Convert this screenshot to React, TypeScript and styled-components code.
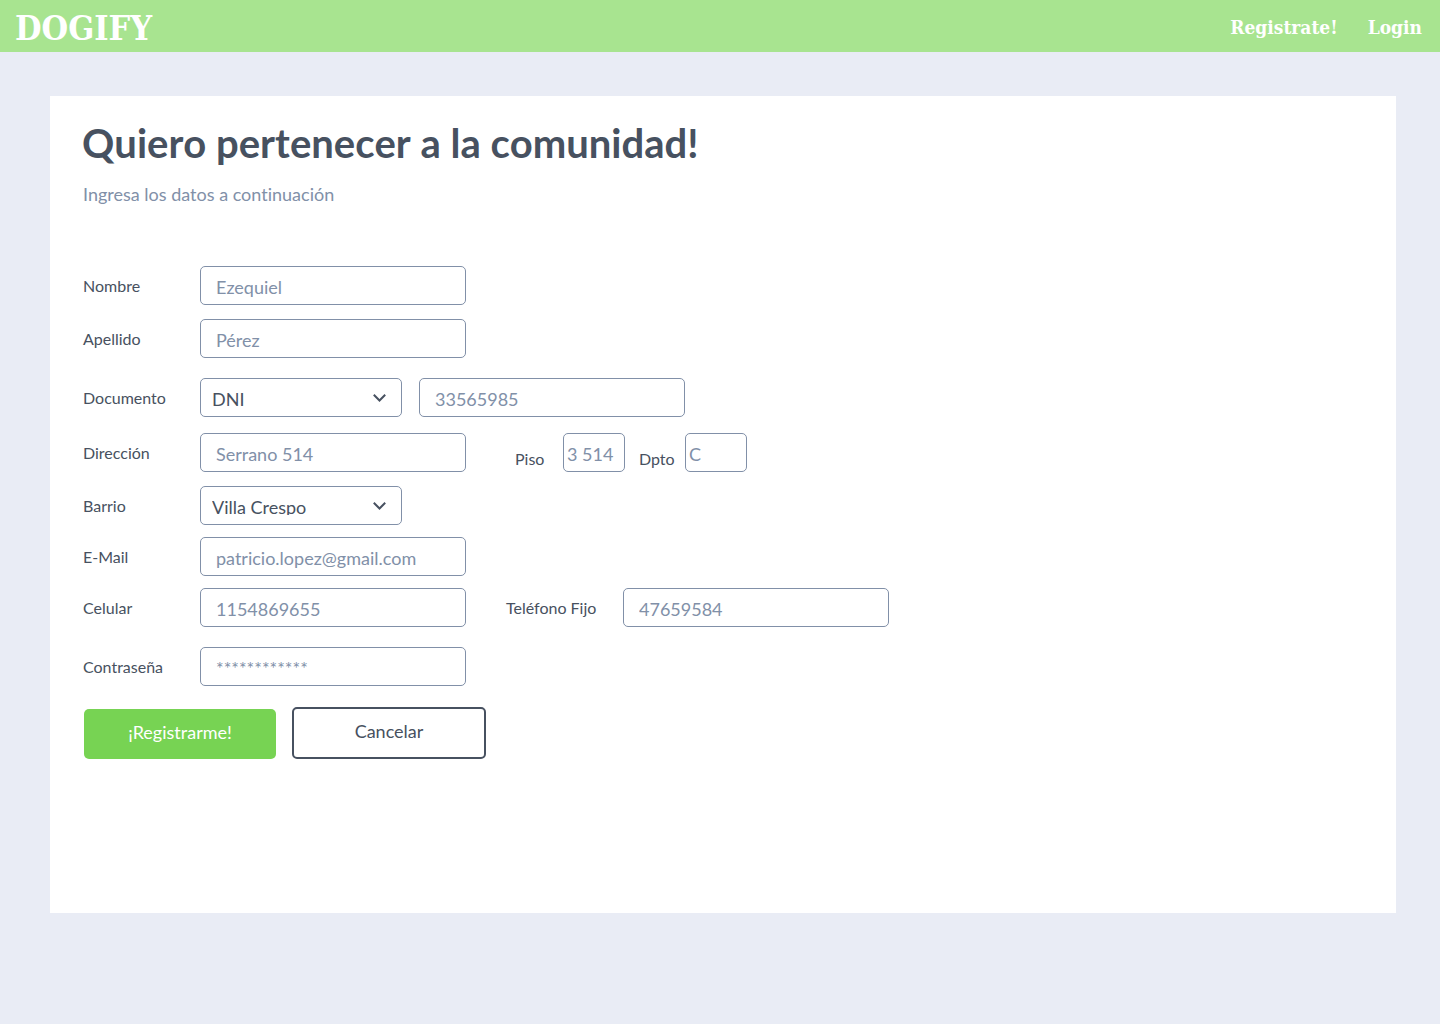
import React from "react";
import styled, { createGlobalStyle } from "styled-components";

const ink = "#475160";
const muted = "#8190a8";
const brand = "#a8e490";

const GlobalStyle = createGlobalStyle`
  * { box-sizing: border-box; }
  body {
    margin: 0;
    background: #e9ecf5;
    color: ${ink};
    font-family: Lato, "Liberation Sans", sans-serif;
    font-size: 16px;
    font-variant-ligatures: none;
  }
`;

const TopBar = styled.header`
  display: flex;
  align-items: center;
  justify-content: space-between;
  height: 52px;
  padding: 4px 18px 0 15px;
  background: ${brand};
`;

const slab = `"DejaVu Serif Condensed", "DejaVu Serif", serif`;

const Logo = styled.a`
  color: #fff;
  font: bold 34px/48px ${slab};
  font-stretch: condensed;
  text-decoration: none;
`;

const Nav = styled.nav`
  display: flex;
  gap: 30px;
  padding-bottom: 2px;
`;

const NavLink = styled.a`
  color: #fff;
  font: bold 19px/24px ${slab};
  font-stretch: condensed;
  text-decoration: none;
`;

const Panel = styled.main`
  min-height: 817px;
  margin: 44px 44px 44px 50px;
  padding: 23px 32px;
  background: #fff;
`;

const Title = styled.h1`
  margin: 0;
  font-size: 40px;
  line-height: 48px;
  font-weight: 700;
  font-kerning: none;
`;

const Subtitle = styled.p`
  margin: 16px 0 0;
  padding-left: 1px;
  color: ${muted};
  font-size: 18px;
  line-height: 22px;
`;

const Form = styled.form`
  margin-top: 61px;
  padding-left: 1px;
`;

const Row = styled.div<{ $gap?: number }>`
  display: flex;
  align-items: center;
  margin-top: ${(p) => p.$gap ?? 0}px;
`;

const Label = styled.label`
  flex: none;
  width: 117px;
  line-height: 20px;
`;

const Group = styled.div<{ $indent: number }>`
  display: flex;
  align-items: center;
  margin-left: ${(p) => p.$indent}px;
`;

const ShortLabel = styled.label<{ $width: number }>`
  width: ${(p) => p.$width}px;
  padding-top: 12px;
  line-height: 20px;
`;

const Input = styled.input<{ $short?: boolean }>`
  width: ${(p) => (p.$short ? 62 : 266)}px;
  height: 39px;
  padding: ${(p) => (p.$short ? "12px 3px 9px" : "12px 15px 9px")};
  border: 1px solid ${muted};
  border-radius: 5px;
  background: #fff;
  color: ${ink};
  font-family: inherit;
  font-size: 18px;

  &::placeholder {
    color: ${muted};
    opacity: 1;
  }
`;

const SelectBox = styled.div`
  position: relative;
  width: 202px;
  margin-right: 17px;
`;

const Select = styled.select`
  display: block;
  width: 100%;
  height: 39px;
  padding: 9px 40px 9px 11px;
  appearance: none;
  border: 1px solid ${muted};
  border-radius: 5px;
  background: #fff;
  color: ${ink};
  font-family: inherit;
  font-size: 18px;
`;

const Chevron = styled.svg`
  position: absolute;
  top: 15px;
  right: 16px;
  pointer-events: none;
`;

const Actions = styled.div`
  display: flex;
  align-items: flex-end;
  gap: 16px;
  margin-top: 21px;
  padding-left: 1px;
`;

const Button = styled.button<{ $primary?: boolean }>`
  width: ${(p) => (p.$primary ? 192 : 194)}px;
  height: ${(p) => (p.$primary ? 50 : 52)}px;
  padding: 0 0 5px;
  border: ${(p) => (p.$primary ? "none" : `2px solid ${ink}`)};
  border-radius: 5px;
  background: ${(p) => (p.$primary ? "#77d353" : "#fff")};
  color: ${(p) => (p.$primary ? "#fff" : ink)};
  font-family: inherit;
  font-size: 18px;
  cursor: pointer;
`;

type FieldProps = { id: string; label: string; placeholder: string; type?: string };

function Field({ id, label, placeholder, type = "text" }: FieldProps) {
  return (
    <>
      <Label htmlFor={id}>{label}</Label>
      <Input id={id} type={type} placeholder={placeholder} />
    </>
  );
}

type DropDownProps = { id: string; label: string; options: string[] };

function DropDown({ id, label, options }: DropDownProps) {
  return (
    <>
      <Label htmlFor={id}>{label}</Label>
      <SelectBox>
        <Select id={id}>
          {options.map((o) => (
            <option key={o}>{o}</option>
          ))}
        </Select>
        <Chevron width="13" height="10" viewBox="0 0 13 10" fill="none">
          <path d="M0.8 1.8 L6.5 7.5 L12.2 1.8" stroke={ink} strokeWidth="2" />
        </Chevron>
      </SelectBox>
    </>
  );
}

export default function App() {
  return (
    <>
      <GlobalStyle />
      <TopBar>
        <Logo href="#">DOGIFY</Logo>
        <Nav>
          <NavLink href="#registro">Registrate!</NavLink>
          <NavLink href="#login">Login</NavLink>
        </Nav>
      </TopBar>
      <Panel>
        <Title>Quiero pertenecer a la comunidad!</Title>
        <Subtitle>Ingresa los datos a continuación</Subtitle>
        <Form onSubmit={(e) => e.preventDefault()}>
          <Row>
            <Field id="nombre" label="Nombre" placeholder="Ezequiel" />
          </Row>
          <Row $gap={14}>
            <Field id="apellido" label="Apellido" placeholder="Pérez" />
          </Row>
          <Row $gap={20}>
            <DropDown id="tipo" label="Documento" options={["DNI"]} />
            <Input aria-label="Número de documento" placeholder="33565985" />
          </Row>
          <Row $gap={16}>
            <Field id="direccion" label="Dirección" placeholder="Serrano 514" />
            <Group $indent={49}>
              <ShortLabel htmlFor="piso" $width={48}>Piso</ShortLabel>
              <Input id="piso" $short placeholder="3 514" />
            </Group>
            <Group $indent={14}>
              <ShortLabel htmlFor="dpto" $width={46}>Dpto</ShortLabel>
              <Input id="dpto" $short placeholder="C" />
            </Group>
          </Row>
          <Row $gap={14}>
            <DropDown id="barrio" label="Barrio" options={["Villa Crespo"]} />
          </Row>
          <Row $gap={12}>
            <Field id="email" type="email" label="E-Mail" placeholder="patricio.lopez@gmail.com" />
          </Row>
          <Row $gap={12}>
            <Field id="celular" type="tel" label="Celular" placeholder="1154869655" />
            <Group $indent={40}>
              <Field id="telefono" type="tel" label="Teléfono Fijo" placeholder="47659584" />
            </Group>
          </Row>
          <Row $gap={20}>
            <Field id="clave" type="password" label="Contraseña" placeholder="************" />
          </Row>
          <Actions>
            <Button type="submit" $primary>¡Registrarme!</Button>
            <Button type="button">Cancelar</Button>
          </Actions>
        </Form>
      </Panel>
    </>
  );
}
